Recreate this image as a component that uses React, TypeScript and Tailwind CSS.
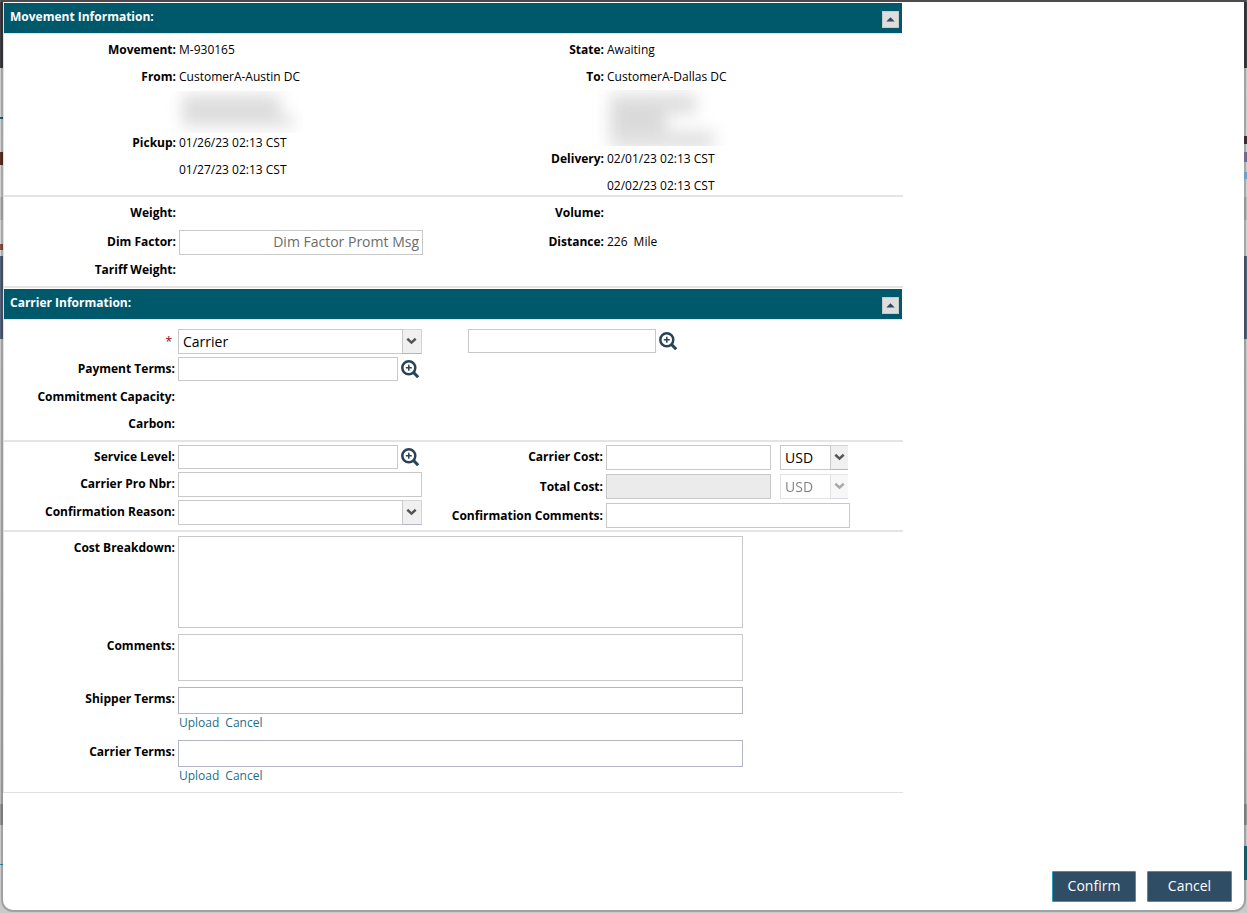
import { useState } from "react";
import type { ReactNode } from "react";
import { clsx } from "clsx";

const inputClass =
  "block border border-[#c8c8c8] bg-white px-1 text-[14px] leading-5 text-black outline-none";

function SectionHeader({
  title,
  open,
  onToggle,
}: {
  title: string;
  open: boolean;
  onToggle: () => void;
}) {
  return (
    <div className="mr-px flex h-[30px] items-start justify-between bg-[#00586b] pl-1.5 pr-[3px]">
      <h2 className="text-[12px] font-bold leading-[27px] text-white">{title}</h2>
      <button
        type="button"
        aria-label="Toggle section"
        aria-expanded={open}
        onClick={onToggle}
        className="mt-2 flex h-[17px] w-[17px] items-center justify-center border border-[#c9c9c9] bg-[#dedede]"
      >
        <svg
          width="9"
          height="5"
          viewBox="0 0 9 5"
          className={clsx("mb-px", !open && "rotate-180")}
        >
          <path d="M4.5 0.3L8.7 4.6H0.3z" fill="#2c4a60" />
        </svg>
      </button>
    </div>
  );
}

function Label({ htmlFor, children }: { htmlFor?: string; children: ReactNode }) {
  const className =
    "w-full shrink-0 text-right text-[12px] font-bold leading-5 text-black";
  return htmlFor ? (
    <label htmlFor={htmlFor} className={className}>
      {children}
    </label>
  ) : (
    <span className={className}>{children}</span>
  );
}

function Field({
  label,
  htmlFor,
  children,
  className,
  narrow,
  top,
}: {
  label: ReactNode;
  htmlFor?: string;
  children?: ReactNode;
  className?: string;
  narrow?: boolean;
  top?: boolean;
}) {
  return (
    <div
      className={clsx(
        "flex gap-[3px] text-[12px] leading-5",
        top ? "items-start" : "items-center",
        className
      )}
    >
      <div className={clsx("flex shrink-0", narrow ? "w-[171px]" : "w-[172px]", top && "pt-0.5")}>
        <Label htmlFor={htmlFor}>{label}</Label>
      </div>
      {children}
    </div>
  );
}

function Select({
  id,
  value,
  options,
  className,
  disabled,
  label,
  compact,
}: {
  id: string;
  value: string;
  options: string[];
  className: string;
  disabled?: boolean;
  label?: string;
  compact?: boolean;
}) {
  return (
    <div className={clsx("relative h-[25px]", className, disabled && "opacity-50")}>
      <select
        id={id}
        aria-label={label}
        defaultValue={value}
        disabled={disabled}
        className="h-full w-full appearance-none border border-[#c8c8c8] bg-white pl-1 pr-5 text-[14px] leading-5 text-black outline-none"
      >
        {options.map((o) => (
          <option key={o}>{o}</option>
        ))}
      </select>
      <span
        className={clsx(
          "pointer-events-none absolute inset-y-0 right-0 flex items-center justify-center border border-[#d4d4d8] border-b-[#b4b4c8] border-l-[#c8c8c8] bg-[#f0f0f0]",
          compact ? "w-[18px] border-r-0" : "w-5 pr-0.5"
        )}
      >
        <svg width="11" height="8" viewBox="0 0 11 8" className="mb-0.5">
          <path
            d="M1.3 1.8L5.5 5.6L9.7 1.8"
            fill="none"
            stroke="#555"
            strokeWidth="2.5"
          />
        </svg>
      </span>
    </div>
  );
}

function LookupButton({ label }: { label: string }) {
  return (
    <button type="button" aria-label={label} className="flex h-6 w-5 items-center">
      <svg width="18" height="18" viewBox="0 0 18 18" fill="none" stroke="#2a4256">
        <circle cx="7.8" cy="7.8" r="6.5" strokeWidth="2.5" />
        <path d="M7.8 4.8v6M4.8 7.8h6" strokeWidth="1.5" />
        <path d="M12.4 12.4L17.2 17.2" strokeWidth="3" />
      </svg>
    </button>
  );
}

function UploadField({ id, label }: { id: string; label: string }) {
  return (
    <Field label={label} htmlFor={id} narrow top>
      <div>
        <input
          id={id}
          className="block h-[27px] w-[565px] border border-[#b4b4c8] px-1 text-[14px] outline-none"
        />
        <div className="flex h-5 gap-1.5 pl-px leading-[17px] text-[#1c6f88]">
          <a href="#">Upload</a>
          <a href="#">Cancel</a>
        </div>
      </div>
    </Field>
  );
}

export default function App() {
  const [movementOpen, setMovementOpen] = useState(true);
  const [carrierOpen, setCarrierOpen] = useState(true);

  return (
    <div className="flex min-h-screen flex-col bg-[#b8b8b8] font-['Open_Sans',sans-serif] text-black">
      <div className="h-0.5 bg-[#5f5d62]" />
      <div className="flex flex-1 bg-[linear-gradient(#3e3e43_66px,#cccccc_66px,#d2d2d2_195px,#bdbdbd_195px,#bdbdbd_218px,#d2d2d2_218px,#d2d2d2_254px,#56627a_254px,#56627a_337px,#c8c8c8_337px,#bcbcbc_802px,#999999_802px,#999999_823px,#cacaca_823px)]">
        {/* Page edge left of the dialog */}
        <div className="w-[3px] shrink-0 bg-[linear-gradient(transparent_115px,#1d6071_115px,#1d6071_117px,transparent_117px,transparent_150px,#5c3027_150px,#5c3027_163px,transparent_163px,transparent_242px,#8b5346_242px,#8b5346_248px,transparent_248px,transparent_862px,#2f8fb5_862px,#2f8fb5_863px,transparent_863px)]" />
        <main className="mb-[3px] flex min-w-0 flex-1 flex-col rounded-b-[10px] bg-white shadow-[0_0_0_2px_#00000033]">
          <div className="w-full max-w-[900px] border-b border-l border-[#e0e0e0] pt-px">
            <SectionHeader
              title="Movement Information:"
              open={movementOpen}
              onToggle={() => setMovementOpen(!movementOpen)}
            />
            <div className="border-t border-[#e0e4ea]">
              {movementOpen && (
                <>
                  <div className="grid grid-cols-[428px_1fr] border-b-2 border-[#e4e4e4] pt-1.5">
                    <div>
                      <Field label="Movement:">M-930165</Field>
                      <Field label="From:" className="mt-[7px]">CustomerA-Austin DC</Field>
                      {/* Redacted address */}
                      <div className="ml-[158px] mt-1 h-[42px] w-[141px] overflow-hidden">
                        <div className="ml-5 mt-1 blur-[8px]">
                          <div className="h-5 w-[98px] bg-[#dcdcdc]" />
                          <div className="h-3 w-[112px] bg-[#e0e0e0]" />
                        </div>
                      </div>
                      <Field label="Pickup:">01/26/23 02:13 CST</Field>
                      <Field label="" className="mt-[7px]">01/27/23 02:13 CST</Field>
                    </div>
                    <div>
                      <Field label="State:">Awaiting</Field>
                      <Field label="To:" className="mt-[7px]">CustomerA-Dallas DC</Field>
                      <div className="ml-[158px] mt-[3px] h-14 w-[138px] overflow-hidden">
                        <div className="ml-5 mt-1 blur-[8px]">
                          <div className="h-5 w-[86px] bg-[#dddddd]" />
                          <div className="h-4 w-14 bg-[#d8d8da]" />
                          <div className="h-5 w-[104px] bg-[#e2e2e2]" />
                        </div>
                      </div>
                      <Field label="Delivery:" className="mt-[3px]">02/01/23 02:13 CST</Field>
                      <Field label="" className="-mb-px mt-[7px]">02/02/23 02:13 CST</Field>
                    </div>
                  </div>

                  <div className="grid grid-cols-[428px_1fr] border-b-2 border-[#e4e4e4] py-1.5">
                    <div>
                      <Field label="Weight:" />
                      <Field label="Dim Factor:" htmlFor="dim" top className="mt-[7px]">
                        <input
                          id="dim"
                          placeholder="Dim Factor Promt Msg"
                          className={clsx(
                            inputClass,
                            "h-[25px] w-[244px] px-[3px]! pb-0.5! text-right placeholder:text-[#6c6c6c]"
                          )}
                        />
                      </Field>
                      <Field label="Tariff Weight:" className="mt-[5px]" />
                    </div>
                    <div>
                      <Field label="Volume:" />
                      <Field label="Distance:" top className="mt-[7px]">
                        <span className="flex gap-1.5 pt-0.5">
                          <span>226</span>
                          <span>Mile</span>
                        </span>
                      </Field>
                    </div>
                  </div>
                </>
              )}
            </div>

            <div className="pt-px">
              <SectionHeader
                title="Carrier Information:"
                open={carrierOpen}
                onToggle={() => setCarrierOpen(!carrierOpen)}
              />
            </div>
            <div className="border-t border-[#e0e4ea]">
              {carrierOpen && (
                <>
                  <div className="grid grid-cols-[428px_1fr] border-b-2 border-[#e4e4e4] pb-1.5 pt-[9px]">
                    <div>
                      <Field
                        narrow
                        htmlFor="party"
                        label={<span className="pr-[3px] font-normal text-[#900010]">*</span>}
                      >
                        <Select
                          id="party"
                          label="Party type"
                          value="Carrier"
                          options={["Carrier", "Broker"]}
                          className="w-[244px]"
                        />
                      </Field>
                      <Field narrow top label="Payment Terms:" htmlFor="payment" className="mt-[3px]">
                        <input id="payment" className={clsx(inputClass, "h-6 w-[220px]")} />
                        <LookupButton label="Find payment terms" />
                      </Field>
                      <Field narrow label="Commitment Capacity:" className="mt-1.5" />
                      <Field narrow label="Carbon:" className="mt-[7px]" />
                    </div>
                    <div className="flex items-start gap-[3px] pl-9">
                      <input aria-label="Carrier" className={clsx(inputClass, "h-6 w-[188px]")} />
                      <LookupButton label="Find carrier" />
                    </div>
                  </div>

                  <div className="grid grid-cols-[428px_1fr] border-b-2 border-[#e4e4e4] pb-0.5 pt-[3px]">
                    <div className="flex flex-col gap-[3px]">
                      <Field narrow label="Service Level:" htmlFor="service">
                        <input id="service" className={clsx(inputClass, "h-6 w-[220px]")} />
                        <LookupButton label="Find service level" />
                      </Field>
                      <Field narrow top label="Carrier Pro Nbr:" htmlFor="pro">
                        <input id="pro" className={clsx(inputClass, "h-[25px] w-[244px]")} />
                      </Field>
                      <Field narrow top label="Confirmation Reason:" htmlFor="reason">
                        <Select id="reason" value="" options={[""]} className="w-[244px]" />
                      </Field>
                    </div>
                    <div className="flex flex-col gap-1">
                      <Field narrow top label="Carrier Cost:" htmlFor="cost">
                        <input id="cost" className={clsx(inputClass, "h-[25px] w-[165px]")} />
                        <Select
                          id="cost-currency"
                          label="Carrier cost currency"
                          value="USD"
                          options={["USD", "CAD"]}
                          className="ml-1.5 w-[68px]"
                          compact
                        />
                      </Field>
                      <Field narrow label="Total Cost:" htmlFor="total">
                        <input
                          id="total"
                          disabled
                          className="h-[25px] w-[165px] border border-[#c8c8c8] bg-[#ebebeb] px-1 text-[14px]"
                        />
                        <Select
                          id="total-currency"
                          label="Total cost currency"
                          value="USD"
                          options={["USD", "CAD"]}
                          className="ml-1.5 w-[68px]"
                          disabled
                          compact
                        />
                      </Field>
                      <Field narrow label="Confirmation Comments:" htmlFor="confirm-comments">
                        <input
                          id="confirm-comments"
                          className={clsx(inputClass, "h-[25px] w-[244px]")}
                        />
                      </Field>
                    </div>
                  </div>

                  <div className="flex flex-col gap-1.5 pb-[5px] pt-1">
                    <Field narrow top label="Cost Breakdown:" htmlFor="breakdown">
                      <textarea
                        id="breakdown"
                        className={clsx(inputClass, "h-[92px] w-[565px] resize-none")}
                      />
                    </Field>
                    <Field narrow top label="Comments:" htmlFor="comments">
                      <textarea
                        id="comments"
                        className={clsx(inputClass, "h-[47px] w-[565px] resize-none")}
                      />
                    </Field>
                    <UploadField id="shipper-terms" label="Shipper Terms:" />
                    <UploadField id="carrier-terms" label="Carrier Terms:" />
                  </div>
                </>
              )}
            </div>
          </div>

          {/* Footer */}
          <div className="mt-auto flex justify-end gap-[11px] pb-2 pr-3 pt-6">
            <button
              type="button"
              className="h-[31px] w-[84px] rounded-[1px] border border-[#2a9bbd] bg-[#2f4e66] pb-0.5 text-[14px] leading-5 text-white"
            >
              Confirm
            </button>
            <button
              type="button"
              className="h-[31px] w-[85px] rounded-[1px] border border-[#2a9bbd] bg-[#2f4e66] pb-0.5 text-[14px] leading-5 text-white"
            >
              Cancel
            </button>
          </div>
        </main>
        {/* Page edge right of the dialog */}
        <div className="w-[3px] shrink-0 bg-[linear-gradient(transparent_134px,#3b2a33_134px,#3b2a33_142px,transparent_142px,transparent_150px,#75688c_150px,#75688c_160px,transparent_160px,transparent_170px,#6fa0c4_170px,#6fa0c4_177px,transparent_177px,transparent_844px,#155a68_844px,#155a68_878px,transparent_878px)]" />
      </div>
    </div>
  );
}
